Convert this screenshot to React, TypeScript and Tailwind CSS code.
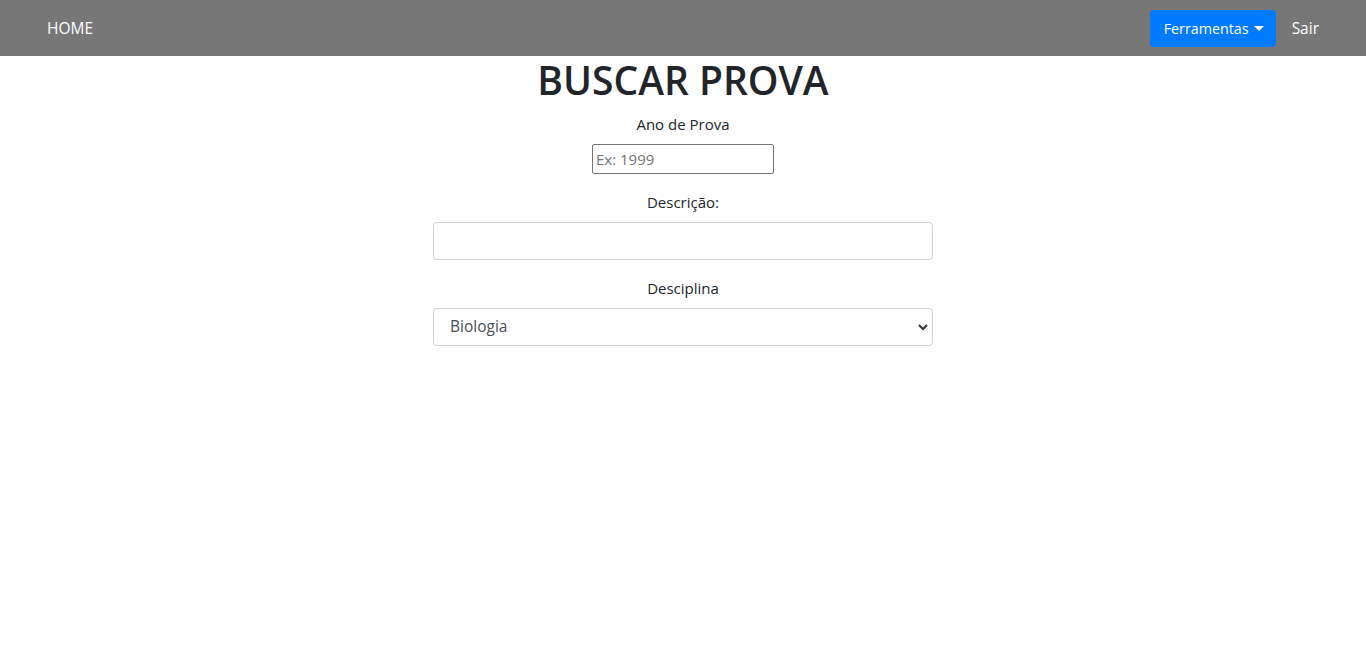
const App = () => {
  return (
    <div className="min-h-screen bg-white text-[#212529]" style={{ fontFamily: '"Open Sans", "Noto Sans", sans-serif' }}>
      <nav className="flex h-[56px] items-center justify-between bg-[#777777] px-[47px] pt-[1px]">
        <a className="text-[15.5px] text-white">HOME</a>
        <div className="flex items-center gap-4">
          <button className="-mt-[1px] flex h-[37px] items-center gap-[5px] rounded bg-[#007bff] pl-[14px] pr-[12px] pt-[1px] text-[14.3px] text-white">
            Ferramentas
            <span className="inline-block h-0 w-0 border-x-[5px] border-t-[5px] border-x-transparent border-t-white" />
          </button>
          <a className="text-[15.5px] text-white">Sair</a>
        </div>
      </nav>

      <main className="flex flex-col items-center">
        <h1 className="mb-2 text-[39px] font-semibold leading-[48px]">BUSCAR PROVA</h1>

        <div className="mb-4 flex flex-col items-center">
          <label className="mb-2 text-[15px] leading-6">Ano de Prova</label>
          <input
            type="text"
            placeholder="Ex: 1999"
            className="h-[30px] w-[182px] rounded-[2px] border border-[#767676] px-[3px] text-[15px] placeholder:text-[#757575]"
          />
        </div>

        <div className="mb-4 flex flex-col items-center">
          <label className="mb-2 text-[15px] leading-6">Descrição:</label>
          <input type="text" className="h-[38px] w-[500px] rounded border border-[#ced4da] px-3 text-[15px]" />
        </div>

        <div className="flex flex-col items-center">
          <label className="mb-2 text-[15px] leading-6">Desciplina</label>
          <div className="relative w-[500px]">
            <select className="h-[38px] w-full appearance-none rounded border border-[#ced4da] bg-white pl-4 text-[15.5px] text-[#495057]">
              <option>Biologia</option>
            </select>
            <svg className="pointer-events-none absolute right-[4px] top-[14px]" width="12" height="10" viewBox="0 0 12 10">
              <path d="M2 3l4 4 4-4" fill="none" stroke="#333" strokeWidth="2" />
            </svg>
          </div>
        </div>
      </main>
    </div>
  );
};

export default App;
